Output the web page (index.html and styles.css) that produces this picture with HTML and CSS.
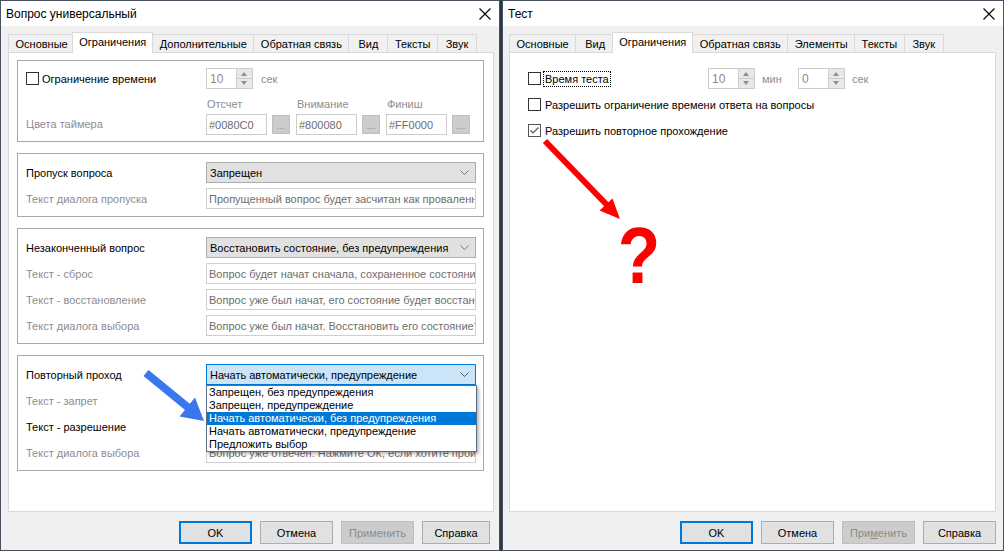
FILE: index.html
```html
<!DOCTYPE html>
<html lang="ru">
<head>
<meta charset="utf-8">
<title>Dialogs</title>
<link rel="stylesheet" href="styles.css">
</head>
<body>
<div class="screen">
  <div class="win win-left">
    <div class="titlebar">
      <span class="title">Вопрос универсальный</span>
      <svg class="close" width="12" height="12" viewBox="0 0 12 12"><path d="M0.5 0.5L11.5 11.5M11.5 0.5L0.5 11.5" stroke="#000" stroke-width="1.1" fill="none"/></svg>
    </div>
    <div class="body">
      <div class="tabs">
        <div class="tab">Основные</div>
        <div class="tab active">Ограничения</div>
        <div class="tab">Дополнительные</div>
        <div class="tab">Обратная связь</div>
        <div class="tab">Вид</div>
        <div class="tab">Тексты</div>
        <div class="tab">Звук</div>
      </div>
      <div class="panel panel-left">
        <div class="group g1">
          <div class="row">
            <div class="lbl chk-lbl"><span class="cb"></span><span>Ограничение времени</span></div>
            <div class="spin"><span class="val">10</span><span class="btns"><span class="up"></span><span class="down"></span></span></div>
            <span class="unit">сек</span>
          </div>
          <div class="color-row">
            <div class="lbl gray">Цвета таймера</div>
            <div class="cell">
              <div class="head">Отсчет</div>
              <div class="pick"><div class="cinput">#0080C0</div><div class="dots">...</div></div>
            </div>
            <div class="cell">
              <div class="head">Внимание</div>
              <div class="pick"><div class="cinput">#800080</div><div class="dots">...</div></div>
            </div>
            <div class="cell">
              <div class="head">Финиш</div>
              <div class="pick"><div class="cinput">#FF0000</div><div class="dots">...</div></div>
            </div>
          </div>
        </div>

        <div class="group">
          <div class="row">
            <div class="lbl">Пропуск вопроса</div>
            <div class="select"><span>Запрещен</span><svg class="chev" width="9" height="5" viewBox="0 0 9 5"><path d="M0.5 0.5L4.5 4.5L8.5 0.5" stroke="#777" fill="none"/></svg></div>
          </div>
          <div class="row">
            <div class="lbl gray">Текст диалога пропуска</div>
            <div class="input">Пропущенный вопрос будет засчитан как проваленный</div>
          </div>
        </div>

        <div class="group">
          <div class="row">
            <div class="lbl">Незаконченный вопрос</div>
            <div class="select"><span>Восстановить состояние, без предупреждения</span><svg class="chev" width="9" height="5" viewBox="0 0 9 5"><path d="M0.5 0.5L4.5 4.5L8.5 0.5" stroke="#777" fill="none"/></svg></div>
          </div>
          <div class="row">
            <div class="lbl gray">Текст - сброс</div>
            <div class="input">Вопрос будет начат сначала, сохраненное состояние будет сброшено</div>
          </div>
          <div class="row">
            <div class="lbl gray">Текст - восстановление</div>
            <div class="input">Вопрос уже был начат, его состояние будет восстановлено</div>
          </div>
          <div class="row">
            <div class="lbl gray">Текст диалога выбора</div>
            <div class="input">Вопрос уже был начат. Восстановить его состояние?</div>
          </div>
        </div>

        <div class="group">
          <div class="row">
            <div class="lbl">Повторный проход</div>
            <div class="select-wrap">
              <div class="select open"><span>Начать автоматически, предупреждение</span><svg class="chev" width="9" height="5" viewBox="0 0 9 5"><path d="M0.5 0.5L4.5 4.5L8.5 0.5" stroke="#555" fill="none"/></svg></div>
              <div class="list">
                <div>Запрещен, без предупреждения</div>
                <div>Запрещен, предупреждение</div>
                <div class="sel">Начать автоматически, без предупреждения</div>
                <div>Начать автоматически, предупреждение</div>
                <div>Предложить выбор</div>
              </div>
            </div>
          </div>
          <div class="row">
            <div class="lbl gray">Текст - запрет</div>
            <div class="input">Вопрос уже отвечен. Повторный проход запрещен.</div>
          </div>
          <div class="row">
            <div class="lbl">Текст - разрешение</div>
            <div class="input">Вопрос уже отвечен. Он будет пройден заново.</div>
          </div>
          <div class="row">
            <div class="lbl gray">Текст диалога выбора</div>
            <div class="input">Вопрос уже отвечен. Нажмите ОК, если хотите пройти его заново.</div>
          </div>
        </div>
      </div>
      <div class="buttons buttons-left">
        <div class="btn default">OK</div>
        <div class="btn">Отмена</div>
        <div class="btn disabled">Применить</div>
        <div class="btn narrow">Справка</div>
      </div>
    </div>
  </div>

  <div class="win win-right">
    <div class="titlebar">
      <span class="title">Тест</span>
      <svg class="close" width="12" height="12" viewBox="0 0 12 12"><path d="M0.5 0.5L11.5 11.5M11.5 0.5L0.5 11.5" stroke="#000" stroke-width="1.1" fill="none"/></svg>
    </div>
    <div class="body">
      <div class="tabs">
        <div class="tab">Основные</div>
        <div class="tab">Вид</div>
        <div class="tab active">Ограничения</div>
        <div class="tab">Обратная связь</div>
        <div class="tab">Элементы</div>
        <div class="tab">Тексты</div>
        <div class="tab">Звук</div>
      </div>
      <div class="panel panel-right">
        <div class="row">
          <div class="lbl chk-lbl"><span class="cb"></span><span class="focus">Время теста</span></div>
          <div class="spin"><span class="val">10</span><span class="btns"><span class="up"></span><span class="down"></span></span></div>
          <span class="unit unit-min">мин</span>
          <div class="spin"><span class="val">0</span><span class="btns"><span class="up"></span><span class="down"></span></span></div>
          <span class="unit">сек</span>
        </div>
        <div class="row">
          <div class="chk-lbl wide"><span class="cb"></span><span>Разрешить ограничение времени ответа на вопросы</span></div>
        </div>
        <div class="row">
          <div class="chk-lbl wide"><span class="cb checked"><svg width="11" height="11" viewBox="0 0 11 11"><path d="M1.5 5.5L4 8L9.5 2.5" stroke="#555" stroke-width="1.2" fill="none"/></svg></span><span>Разрешить повторное прохождение</span></div>
        </div>
      </div>
      <div class="buttons">
        <div class="btn default">OK</div>
        <div class="btn">Отмена</div>
        <div class="btn disabled">При<u>м</u>енить</div>
        <div class="btn">Справка</div>
      </div>
    </div>
  </div>

  <svg class="overlay" width="1004" height="551" viewBox="0 0 1004 551">
    <line x1="146" y1="373" x2="190" y2="409" stroke="#3a77ef" stroke-width="8"/>
    <polygon points="204,421 179.5,416.5 195,397.5" fill="#3a77ef"/>
    <line x1="545" y1="141" x2="608" y2="206" stroke="#ff0000" stroke-width="6"/>
    <polygon points="620,219 599.5,210.5 612.5,198.5" fill="#ff0000"/>
    <text x="0" y="0" transform="translate(639 283) scale(0.88 1)" font-family="Liberation Sans, Arial, sans-serif" font-weight="bold" font-size="79" fill="#ff0000" text-anchor="middle">?</text>
  </svg>
</div>
</body>
</html>
```
FILE: styles.css
```css
* { box-sizing: border-box; }
body {
  margin: 0;
  font-family: "Liberation Sans", Arial, sans-serif;
  font-size: 11px;
  color: #000;
  background: #2f3742;
}
.screen {
  position: relative;
  display: flex;
  gap: 2px;
  width: 1004px;
  height: 551px;
  background: #2f3742;
  overflow: hidden;
}
.win {
  position: relative;
  height: 551px;
  background: #f0f0f0;
  border: 1px solid #485160;
  display: flex;
  flex-direction: column;
}
.win-left { width: 500px; }
.win-right { width: 502px; }
.titlebar {
  height: 25px;
  flex: none;
  background: #fff;
  display: flex;
  align-items: center;
  justify-content: space-between;
  padding: 0 8px 0 5px;
}
.title { line-height: 14px; font-size: 12px; }
.body {
  flex: 1;
  display: flex;
  flex-direction: column;
  padding: 6px 5px 0 7px;
}
.win-right .body { padding: 6px 7px 0 6px; }

/* tabs */
.tabs {
  position: relative;
  z-index: 2;
  height: 20px;
  display: flex;
  align-items: flex-end;
}
.tab {
  height: 18px;
  min-width: 40px;
  padding: 0 6.5px;
  border: 1px solid #d9d9d9;
  border-bottom: none;
  margin-right: -1px;
  background: #f0f0f0;
  display: flex;
  align-items: center;
  justify-content: center;
  white-space: nowrap;
}
.tab.active {
  height: 21px;
  margin: 0 -1px -1px -2px;
  padding: 0 6px 2px;
  background: #fff;
  position: relative;
  z-index: 3;
}

/* panel */
.panel {
  position: relative;
  z-index: 1;
  height: 460px;
  flex: none;
  background: #fff;
  border: 1px solid #d9d9d9;
}
.panel-left { padding: 7px 9px 0 8px; }
.panel-right {
  padding: 15px 18px 0 18px;
  display: flex;
  flex-direction: column;
  gap: 5px;
}

/* groups */
.group {
  border: 1px solid #a9a9a9;
  padding: 8px 7px 7px 8px;
  display: flex;
  flex-direction: column;
  gap: 5px;
  margin-bottom: 11px;
}
.group.g1 { padding: 7px 7px 6px 8px; gap: 0; }
.row {
  height: 21px;
  display: flex;
  align-items: center;
}
.lbl {
  width: 180px;
  flex: none;
  white-space: nowrap;
}
.gray { color: #8d8d8d; }
.chk-lbl {
  display: flex;
  align-items: center;
  gap: 3px;
}
.panel-right .chk-lbl { gap: 4px; }
.chk-lbl.wide { width: auto; }
.cb {
  width: 13px;
  height: 13px;
  flex: none;
  border: 1px solid #333;
  background: #fff;
  display: flex;
  align-items: center;
  justify-content: center;
}
.cb.checked { border-color: #555; }
.focus {
  outline: 1px dotted #000;
  padding: 1px 1px;
  margin-left: -1px;
}

/* spin */
.spin {
  width: 47px;
  height: 21px;
  flex: none;
  border: 1px solid #cccccc;
  background: #fff;
  display: flex;
}
.spin .val {
  flex: 1;
  padding-left: 3px;
  color: #8a8a8a;
  font-size: 12px;
  display: flex;
  align-items: center;
}
.spin .btns {
  width: 16px;
  display: flex;
  flex-direction: column;
  border-left: 1px solid #cccccc;
}
.spin .up, .spin .down {
  flex: 1;
  background: #e8e8e8;
  position: relative;
}
.spin .up { border-bottom: 1px solid #cccccc; }
.spin .up::after, .spin .down::after {
  content: "";
  position: absolute;
  left: 4px;
  border-left: 3.5px solid transparent;
  border-right: 3.5px solid transparent;
}
.spin .up::after { top: 3px; border-bottom: 4px solid #8f8f8f; }
.spin .down::after { top: 2px; border-top: 4px solid #8f8f8f; }
.unit { margin-left: 8px; color: #8d8d8d; }
.unit-min { width: 36px; margin-left: 7px; flex: none; }
.panel-right .unit { margin-left: 7px; }

/* color row */
.color-row {
  margin-top: 8px;
  display: flex;
  align-items: flex-end;
}
.color-row .lbl { height: 21px; line-height: 21px; }
.cell {
  width: 90px;
  flex: none;
  display: flex;
  flex-direction: column;
}
.cell .head {
  height: 14px;
  line-height: 14px;
  padding-left: 1px;
  margin-bottom: 3px;
  color: #8d8d8d;
}
.pick { display: flex; align-items: center; gap: 5px; }
.cinput {
  width: 61px;
  height: 21px;
  border: 1px solid #cccccc;
  background: #fff;
  color: #6d6d6d;
  padding-left: 2px;
  display: flex;
  align-items: center;
}
.dots {
  width: 18px;
  height: 19px;
  background: #cccccc;
  border: 1px solid #bfbfbf;
  color: #8a8a8a;
  font-size: 10px;
  display: flex;
  align-items: flex-end;
  justify-content: center;
  padding-bottom: 2px;
  line-height: 10px;
}

/* controls */
.select {
  width: 270px;
  height: 21px;
  flex: none;
  border: 1px solid #adadad;
  background: #e1e1e1;
  display: flex;
  align-items: center;
  justify-content: space-between;
  padding: 0 6px 0 3px;
  white-space: nowrap;
}
.select.open {
  background: #cce4f7;
  border-color: #0078d7;
}
.select-wrap { position: relative; }
.list {
  position: absolute;
  top: 21px;
  left: 0;
  width: 271px;
  background: #fff;
  border: 1px solid #5a6f88;
  box-shadow: 2px 2px 3px rgba(0, 0, 0, 0.28);
  z-index: 5;
}
.list div {
  height: 13px;
  line-height: 13px;
  padding-left: 2px;
  white-space: nowrap;
}
.list .sel { background: #0078d7; color: #fff; }
.input {
  width: 270px;
  height: 21px;
  flex: none;
  border: 1px solid #cfcfcf;
  background: #fff;
  color: #6d6d6d;
  padding-left: 2px;
  display: flex;
  align-items: center;
  white-space: nowrap;
  overflow: hidden;
}

/* buttons */
.buttons {
  margin-top: 9px;
  display: flex;
  justify-content: flex-end;
  gap: 8px;
}
.buttons-left { padding-right: 4px; }
.btn {
  width: 73px;
  height: 23px;
  border: 1px solid #adadad;
  background: #e1e1e1;
  display: flex;
  align-items: center;
  justify-content: center;
}
.btn.narrow { width: 68px; }
.btn.default { border: 2px solid #0078d7; }
.btn.disabled {
  background: #cccccc;
  border-color: #bfbfbf;
  color: #8a8a8a;
}
.btn u { text-decoration: underline; }

.overlay {
  position: absolute;
  left: 0;
  top: 0;
  pointer-events: none;
  z-index: 10;
}
```
